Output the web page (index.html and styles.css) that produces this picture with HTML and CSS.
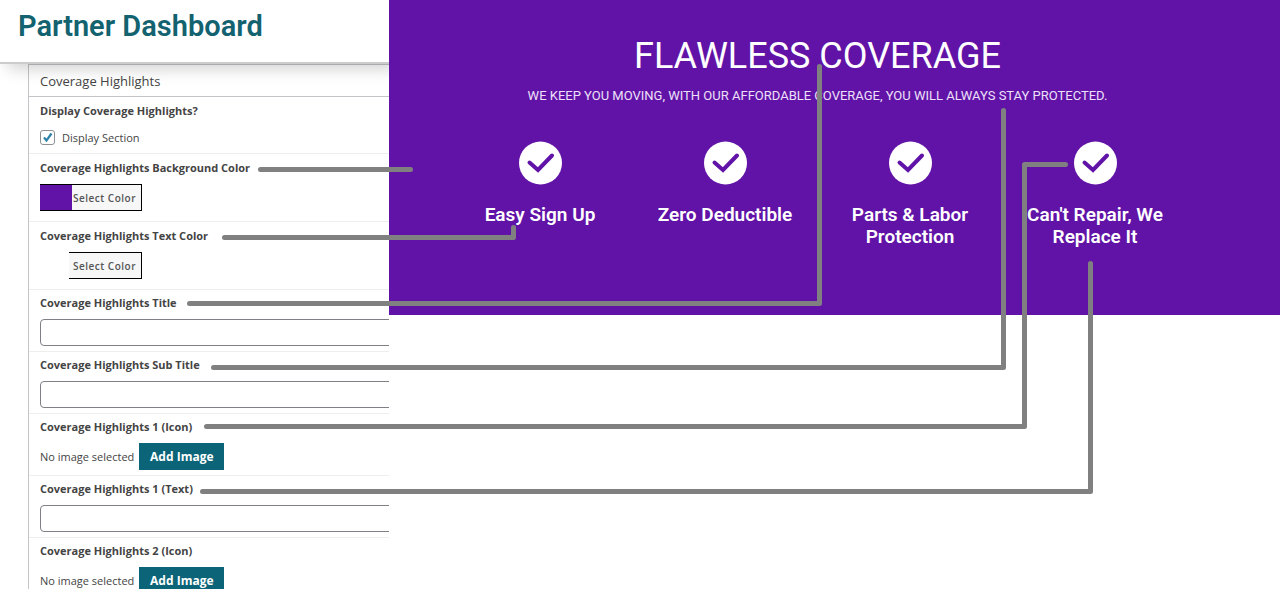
FILE: index.html
```html
<!DOCTYPE html>
<html lang="en">
<head>
  <meta charset="UTF-8">
  <title>Partner Dashboard</title>
  <link rel="stylesheet" href="styles.css">
</head>
<body>
  <div class="page">
    <div class="sidebar">
      <header class="topbar">
        <h1>Partner Dashboard</h1>
      </header>

      <form class="panel">
        <h2>Coverage Highlights</h2>

        <div class="field tall">
          <div class="label">Display Coverage Highlights?</div>
          <label class="check"><input type="checkbox" checked> Display Section</label>
        </div>
        <div class="field tall color">
          <div class="label">Coverage Highlights Background Color</div>
          <button type="button" class="picker purple">Select Color</button>
        </div>
        <div class="field tall color">
          <div class="label">Coverage Highlights Text Color</div>
          <button type="button" class="picker white">Select Color</button>
        </div>
        <div class="field">
          <label class="label" for="title">Coverage Highlights Title</label>
          <input type="text" id="title">
        </div>
        <div class="field">
          <label class="label" for="subtitle">Coverage Highlights Sub Title</label>
          <input type="text" id="subtitle">
        </div>
        <div class="field">
          <div class="label">Coverage Highlights 1 (Icon)</div>
          <div class="upload">No image selected <button type="button" class="add">Add Image</button></div>
        </div>
        <div class="field">
          <label class="label" for="text1">Coverage Highlights 1 (Text)</label>
          <input type="text" id="text1">
        </div>
        <div class="field">
          <div class="label">Coverage Highlights 2 (Icon)</div>
          <div class="upload">No image selected <button type="button" class="add">Add Image</button></div>
        </div>
      </form>
    </div>

    <section class="preview">
      <h2>FLAWLESS COVERAGE</h2>
      <p>WE KEEP YOU MOVING, WITH OUR AFFORDABLE COVERAGE, YOU WILL ALWAYS STAY PROTECTED.</p>
      <div class="highlights">
        <div class="item">
          <svg viewBox="0 0 44 44"><circle cx="22.500" cy="22" r="21.500"/><path d="M11.500 21.500l8.500 7.500L34 14.500"/></svg>
          <h3>Easy Sign Up</h3>
        </div>
        <div class="item">
          <svg viewBox="0 0 44 44"><circle cx="22.500" cy="22" r="21.500"/><path d="M11.500 21.500l8.500 7.500L34 14.500"/></svg>
          <h3>Zero Deductible</h3>
        </div>
        <div class="item">
          <svg viewBox="0 0 44 44"><circle cx="22.500" cy="22" r="21.500"/><path d="M11.500 21.500l8.500 7.500L34 14.500"/></svg>
          <h3>Parts &amp; Labor Protection</h3>
        </div>
        <div class="item">
          <svg viewBox="0 0 44 44"><circle cx="22.500" cy="22" r="21.500"/><path d="M11.500 21.500l8.500 7.500L34 14.500"/></svg>
          <h3>Can't Repair, We Replace It</h3>
        </div>
      </div>
    </section>

    <!-- lines from each setting to the part it changes -->
    <svg class="lines" width="1280" height="606" viewBox="0 0 1280 606">
      <path d="M260.500 169.500H410.500"/>
      <path d="M224.500 237.500H513.500V227.500"/>
      <path d="M189.500 303.500H819.500V66.500"/>
      <path d="M213.500 367.500H1003.500V110.500"/>
      <path d="M206.500 426.500H1024.500V164.500H1065.500"/>
      <path d="M202.500 491.500H1090.500V263.500"/>
    </svg>
  </div>
</body>
</html>
```

FILE: styles.css
```css
* { box-sizing: border-box; }
body { margin: 0; background: #fff; color: #444; font-family: "Open Sans", "Noto Sans", sans-serif; font-size: 11px; }
h1, h2, h3, p { margin: 0; }

.page { position: relative; display: grid; grid-template-columns: 389px 1fr; align-items: start; overflow: hidden; }

.sidebar { height: calc(100vh - 17px); overflow: hidden; }
.topbar { position: relative; height: 64px; padding: 8px 18px; border-bottom: 2px solid #ccc; box-shadow: 8px 4px 16px rgba(0, 0, 0, 0.2); }
.topbar h1 { color: #13626f; font: 600 29px/36px Roboto, sans-serif; }

.panel { margin-left: 28px; border: 1px solid #c3c4c7; border-width: 1px 0 0 1px; }
.panel h2 { height: 32px; padding-left: 11px; border-bottom: 1px solid #c3c4c7; font-size: 13px; font-weight: 400; line-height: 32px; }
.field { padding: 4px 0 5px 11px; border-bottom: 1px solid #eee; white-space: nowrap; }
.field.tall { padding-top: 5px; }
.field.color { padding-bottom: 10px; }
.label { display: block; margin-bottom: 7px; font-weight: bold; line-height: 18px; }

.check { display: flex; align-items: center; gap: 7px; height: 21px; }
.check input { appearance: none; width: 15px; height: 15px; margin: 0; border: 1px solid #8c8f94; border-radius: 3px; background: #fff; }
.check input:checked { background: #fff url("data:image/svg+xml,%3Csvg xmlns='http://www.w3.org/2000/svg' viewBox='0 0 13 13'%3E%3Cpath d='M3 6.500l2.500 3L10.500 2.500' fill='none' stroke='%232c82ab' stroke-width='2.200'/%3E%3C/svg%3E"); }

input[type=text] { display: block; width: calc(100% + 20px); height: 27px; border: 1px solid #7e8085; border-radius: 4px; background: #fff; }

.picker { display: block; width: 102px; height: 27px; padding: 2px 5px 0 0; border: 1px solid #000; border-left: 0; border-radius: 0; color: #555; font: 600 10px/23px "Open Sans", sans-serif; letter-spacing: 0.5px; text-align: right; }
.purple { background: linear-gradient(to right, #6013a6 32px, #f7f7f7 32px); }
.white { width: 73px; margin-left: 29px; background: #f7f7f7; }

.upload { display: flex; align-items: center; gap: 5px; }
.add { width: 85px; height: 27px; padding: 0; border: 0; background: #0b6478; color: #fff; font: bold 12px/27px "Open Sans", sans-serif; }

.preview { min-height: 315px; padding: 35px 34px 0 0; background: #6013a6; color: #fff; font-family: Roboto, sans-serif; text-align: center; }
.preview h2 { font-size: 36px; font-weight: 400; line-height: 42px; }
.preview p { margin-top: 9px; color: #eee0fa; font-size: 13px; line-height: 20px; }
.highlights { display: grid; grid-template-columns: repeat(4, 185px); justify-content: center; margin-top: 35px; }
.item { padding: 0 20px; }
.item svg { display: block; width: 44px; height: 44px; margin: 0 auto 19px; }
.item circle { fill: #fff; }
.item path { fill: none; stroke: #6013a6; stroke-width: 4; stroke-linecap: round; }
.item h3 { margin: 0 -10px; font-size: 19px; font-weight: 600; line-height: 22px; }

.lines { position: absolute; top: 0; left: 0; pointer-events: none; }
.lines path { fill: none; stroke: #808080; stroke-width: 5; stroke-linecap: round; stroke-linejoin: round; }
```
